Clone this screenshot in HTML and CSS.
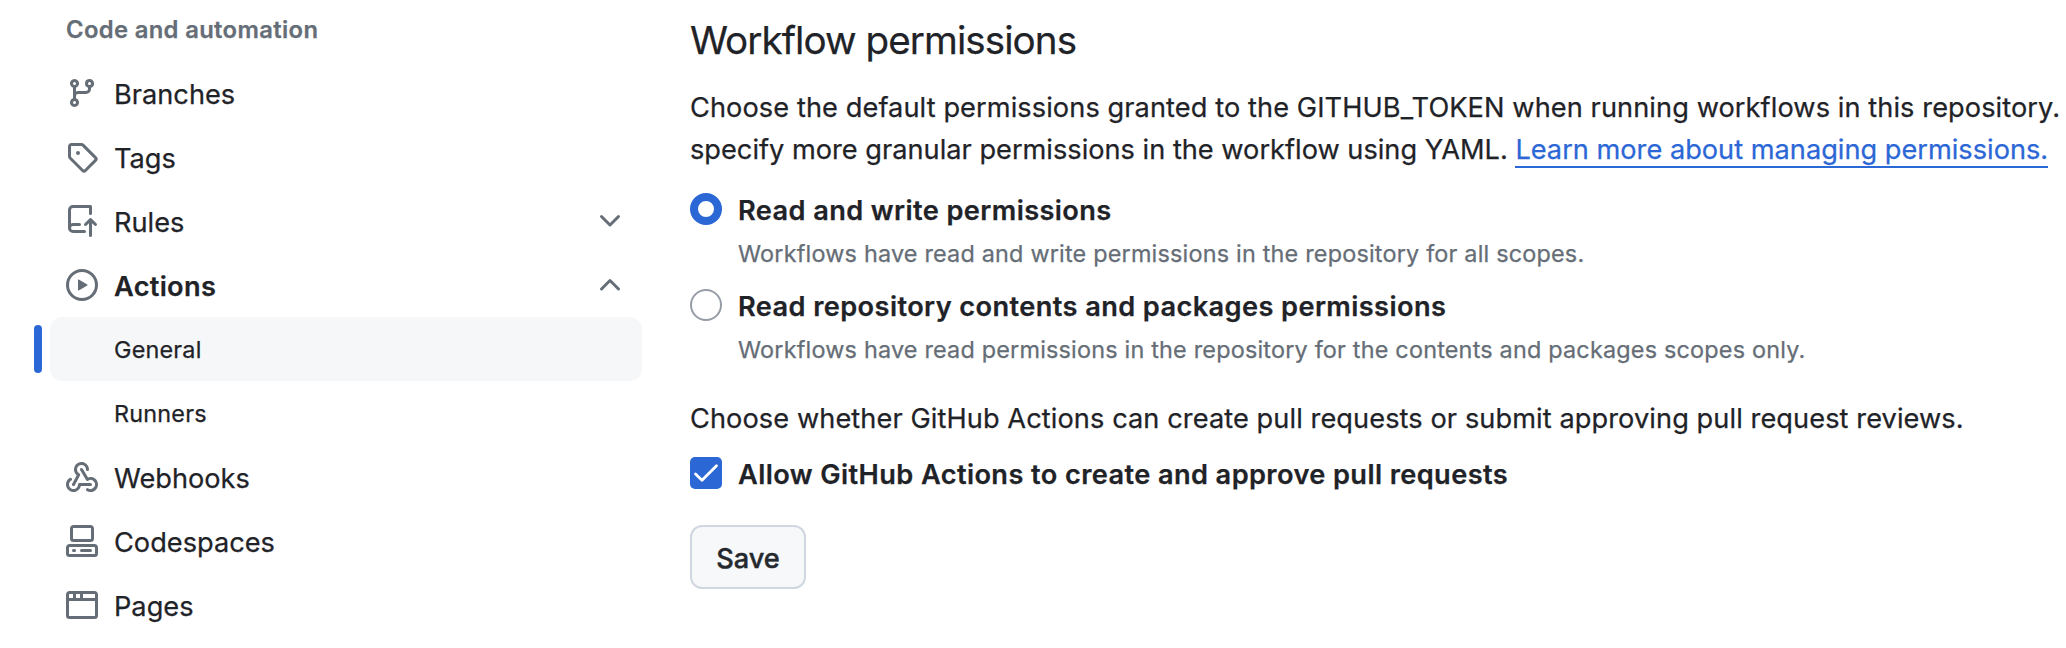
FILE: index.html
```html
<!DOCTYPE html>
<html lang="en">
<head>
<meta charset="utf-8">
<title>Workflow permissions</title>
<link rel="stylesheet" href="styles.css">
</head>
<body>
<div class="page">
  <nav class="sidebar">
    <h3 class="nav-heading">Code and automation</h3>
    <ul class="nav-list">
      <li class="nav-item"><svg class="icon" viewBox="0 0 16 16"><path d="M9.5 3.25a2.25 2.25 0 1 1 3 2.122V6A2.5 2.5 0 0 1 10 8.5H6a1 1 0 0 0-1 1v1.128a2.251 2.251 0 1 1-1.5 0V5.372a2.25 2.25 0 1 1 1.5 0v1.836A2.493 2.493 0 0 1 6 7h4a1 1 0 0 0 1-1v-.628A2.25 2.25 0 0 1 9.5 3.25Zm-6 0a.75.75 0 1 0 1.5 0 .75.75 0 0 0-1.5 0Zm8.25-.75a.75.75 0 1 0 0 1.5.75.75 0 0 0 0-1.5ZM4.25 12a.75.75 0 1 0 0 1.5.75.75 0 0 0 0-1.5Z"/></svg><span class="nav-label">Branches</span></li>
      <li class="nav-item"><svg class="icon" viewBox="0 0 16 16"><path d="M1 7.775V2.75C1 1.784 1.784 1 2.75 1h5.025c.464 0 .91.184 1.238.513l6.25 6.25a1.75 1.75 0 0 1 0 2.474l-5.026 5.026a1.75 1.75 0 0 1-2.474 0l-6.25-6.25A1.752 1.752 0 0 1 1 7.775Zm1.5 0c0 .066.026.13.073.177l6.25 6.25a.25.25 0 0 0 .354 0l5.025-5.025a.25.25 0 0 0 0-.354l-6.25-6.25a.25.25 0 0 0-.177-.073H2.75a.25.25 0 0 0-.25.25ZM6 5a1 1 0 1 1 0 2 1 1 0 0 1 0-2Z"/></svg><span class="nav-label">Tags</span></li>
      <li class="nav-item"><svg class="icon" viewBox="0 0 16 16"><path d="M1 2.5A2.5 2.5 0 0 1 3.5 0h8.75a.75.75 0 0 1 .75.75v3.5a.75.75 0 0 1-1.5 0V1.5h-8a1 1 0 0 0-1 1v6.708A2.493 2.493 0 0 1 3.5 9h3.25a.75.75 0 0 1 0 1.5H3.5a1 1 0 0 0 0 2h5.75a.75.75 0 0 1 0 1.5H3.5A2.5 2.5 0 0 1 1 11.5Zm13.23 7.79-1.224-1.224v6.184a.75.75 0 0 1-1.5 0V9.066L10.28 10.29a.75.75 0 0 1-1.06-1.061l2.505-2.504a.75.75 0 0 1 1.06 0L15.29 9.23a.751.751 0 0 1-.018 1.042.751.751 0 0 1-1.042.018Z"/></svg><span class="nav-label">Rules</span><svg class="icon" viewBox="0 0 16 16"><path d="M12.78 5.22a.749.749 0 0 1 0 1.06l-4.25 4.25a.749.749 0 0 1-1.06 0L3.22 6.28a.749.749 0 1 1 1.06-1.06L8 8.939l3.72-3.719a.749.749 0 0 1 1.06 0Z"/></svg></li>
      <li class="nav-item open"><svg class="icon" viewBox="0 0 16 16"><path d="M8 0a8 8 0 1 1 0 16A8 8 0 0 1 8 0ZM1.5 8a6.5 6.5 0 1 0 13 0 6.5 6.5 0 0 0-13 0Zm4.879-2.773 4.264 2.559a.25.25 0 0 1 0 .428l-4.264 2.559A.25.25 0 0 1 6 10.559V5.442a.25.25 0 0 1 .379-.215Z"/></svg><span class="nav-label">Actions</span><svg class="icon" viewBox="0 0 16 16"><path d="M3.22 10.53a.749.749 0 0 1 0-1.06l4.25-4.25a.749.749 0 0 1 1.06 0l4.25 4.25a.749.749 0 1 1-1.06 1.06L8 6.811 4.28 10.53a.749.749 0 0 1-1.06 0Z"/></svg></li>
      <li class="nav-item sub current"><span class="nav-label">General</span></li>
      <li class="nav-item sub"><span class="nav-label">Runners</span></li>
      <li class="nav-item"><svg class="icon" viewBox="0 0 16 16"><path d="M5.5 4.25a2.25 2.25 0 0 1 4.5 0 .75.75 0 0 0 1.5 0 3.75 3.75 0 1 0-6.14 2.889l-2.272 4.258a.75.75 0 0 0 1.324.706L7 7.25a.75.75 0 0 0-.309-1.015A2.25 2.25 0 0 1 5.5 4.25Z"/><path d="M7.364 3.607a.75.75 0 0 1 1.03.257l2.608 4.349a3.75 3.75 0 1 1-.628 6.785.75.75 0 0 1 .752-1.299 2.25 2.25 0 1 0-.033-3.88.75.75 0 0 1-1.03-.256L7.107 4.636a.75.75 0 0 1 .257-1.03Z"/><path d="M2.9 8.776A.75.75 0 0 1 2.625 9.8 2.25 2.25 0 1 0 6 11.75a.75.75 0 0 1 .75-.751h5.5a.75.75 0 0 1 0 1.5H7.425a3.751 3.751 0 1 1-5.55-3.998.75.75 0 0 1 1.024.274Z"/></svg><span class="nav-label">Webhooks</span></li>
      <li class="nav-item"><svg class="icon" viewBox="0 0 16 16"><path d="M0 11.25c0-.966.784-1.75 1.75-1.75h12.5c.966 0 1.75.784 1.75 1.75v3A1.75 1.75 0 0 1 14.25 16H1.75A1.75 1.75 0 0 1 0 14.25Zm2-9.5C2 .784 2.784 0 3.75 0h8.5C13.216 0 14 .784 14 1.75v5a1.75 1.75 0 0 1-1.75 1.75h-8.5A1.75 1.75 0 0 1 2 6.75Zm1.75-.25a.25.25 0 0 0-.25.25v5c0 .138.112.25.25.25h8.5a.25.25 0 0 0 .25-.25v-5a.25.25 0 0 0-.25-.25Zm-2 9.5a.25.25 0 0 0-.25.25v3c0 .138.112.25.25.25h12.5a.25.25 0 0 0 .25-.25v-3a.25.25 0 0 0-.25-.25ZM7 12.75a.75.75 0 0 1 .75-.75h4.5a.75.75 0 0 1 0 1.5h-4.5a.75.75 0 0 1-.75-.75Zm-4 0a.75.75 0 0 1 .75-.75h.5a.75.75 0 0 1 0 1.5h-.5a.75.75 0 0 1-.75-.75Z"/></svg><span class="nav-label">Codespaces</span></li>
      <li class="nav-item"><svg class="icon" viewBox="0 0 16 16"><path d="M0 2.75C0 1.784.784 1 1.75 1h12.5c.966 0 1.75.784 1.75 1.75v10.5A1.75 1.75 0 0 1 14.25 15H1.75A1.75 1.75 0 0 1 0 13.25ZM14.5 6h-13v7.25c0 .138.112.25.25.25h12.5a.25.25 0 0 0 .25-.25Zm-6-3.5v2h6V2.75a.25.25 0 0 0-.25-.25ZM5 2.5v2h2v-2Zm-3.25 0a.25.25 0 0 0-.25.25V4.5h2v-2Z"/></svg><span class="nav-label">Pages</span></li>
    </ul>
  </nav>
  <main class="content">
    <h2 class="title">Workflow permissions</h2>
    <p class="text"><span class="wide">Choose the default permissions granted to the GITHUB_TOKEN when running workflows in this repository.</span><br>specify more granular permissions in the workflow using YAML. <a class="link">Learn more about managing permissions.</a></p>
    <div class="option">
      <span class="radio checked"></span>
      <div>
        <div class="option-label">Read and write permissions</div>
        <div class="note">Workflows have read and write permissions in the repository for all scopes.</div>
      </div>
    </div>
    <div class="option">
      <span class="radio"></span>
      <div>
        <div class="option-label">Read repository contents and packages permissions</div>
        <div class="note">Workflows have read permissions in the repository for the contents and packages scopes only.</div>
      </div>
    </div>
    <p class="review wide">Choose whether GitHub Actions can create pull requests or submit approving pull request reviews.</p>
    <div class="option allow">
      <span class="checkbox"><svg viewBox="0 0 32 32"><path d="M5.5 17 12 23.3 26.5 8.8"/></svg></span>
      <div class="option-label">Allow GitHub Actions to create and approve pull requests</div>
    </div>
    <button class="save">Save</button>
  </main>
</div>
</body>
</html>
```
FILE: styles.css
```css
* { box-sizing: border-box; }
body {
  margin: 0;
  background: #fff;
  color: #1f2328;
  font-family: Inter, "Liberation Sans", sans-serif;
  font-size: 27.2px;
  line-height: 42px;
  overflow: hidden;
  -webkit-text-stroke: .25px currentColor;
}
.page { display: flex; height: 648px; overflow: hidden; }
.sidebar { width: 690px; padding: 12px 48px 0 50px; flex: none; }
.nav-heading { margin: 0 0 13px; padding-left: 16px; font-size: 23.8px; line-height: 36px; font-weight: 600; letter-spacing: .35px; color: #656d76; }
.nav-list { list-style: none; margin: 0; padding: 0; }
.nav-item { position: relative; display: flex; align-items: center; gap: 16px; height: 64px; padding: 0 16px; border-radius: 12px; }
.nav-label { flex: 1; padding-top: 3px; }
.icon { width: 32px; height: 32px; flex: none; fill: #656d76; }
.open { font-weight: 600; letter-spacing: .3px; }
.sub { padding-left: 64px; font-size: 23.4px; letter-spacing: .2px; }
.sub .nav-label { padding-top: 2px; }
.current { background: #f5f7f9; }
.current::before { content: ""; position: absolute; left: -16px; top: 8px; width: 8px; height: 48px; border-radius: 4px; background: #2c67d6; }
.content { flex: 1; padding-top: 10px; white-space: nowrap; }
.title { margin: 0 0 17px; font-size: 38.6px; line-height: 60px; font-weight: 400; letter-spacing: -.93px; }
.text { margin: 0 0 18px; }
.wide { letter-spacing: .08px; }
.link { color: #2c67d6; border-bottom: 2px solid #2c67d6; }
.option { display: flex; gap: 16px; height: 96px; }
.radio, .checkbox { flex: none; width: 32px; height: 32px; margin-top: 4px; }
.radio { border: 2px solid #979da6; border-radius: 50%; }
.radio.checked { border: 8px solid #2c67d6; }
.checkbox { display: flex; border-radius: 5px; background: #2c67d6; }
.checkbox svg { width: 32px; height: 32px; fill: none; stroke: #fff; stroke-width: 2.8; stroke-linecap: round; stroke-linejoin: round; }
.option-label { padding-top: 1px; font-weight: 600; letter-spacing: .4px; }
.note { margin-top: 4px; font-size: 23.4px; line-height: 36px; letter-spacing: .2px; color: #656d76; }
.review { margin: 17px 0 13px; }
.allow { height: 72px; }
.save { display: flex; align-items: center; justify-content: center; width: 116px; height: 64px; padding: 2px 0 0; border: 2px solid #d1d7e0; border-radius: 12px; background: #f6f8fa; color: #25292e; font: 500 27.2px Inter, "Liberation Sans", sans-serif; -webkit-text-stroke: .4px currentColor; }
```
